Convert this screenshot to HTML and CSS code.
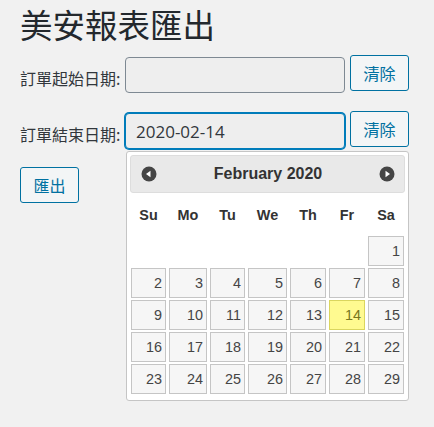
FILE: index.html
```html
<!DOCTYPE html>
<html lang="zh-Hant">
<head>
<meta charset="utf-8">
<title>美安報表匯出</title>
<link rel="stylesheet" href="styles.css">
</head>
<body>
<div class="wrap">
  <h1 class="page-title">美安報表匯出</h1>
  <form class="export-form">
    <div class="field-row">
      <label class="field-label" for="start">訂單起始日期:</label>
      <input class="date-input" id="start" type="text" value="">
      <button type="button" class="btn">清除</button>
    </div>
    <div class="field-row">
      <label class="field-label" for="end">訂單結束日期:</label>
      <input class="date-input is-focused" id="end" type="text" value="2020-02-14">
      <button type="button" class="btn">清除</button>
    </div>
    <div class="submit-row">
      <button type="submit" class="btn">匯出</button>
    </div>
  </form>

  <div class="datepicker">
    <div class="dp-header">
      <span class="dp-nav"><svg width="16" height="16" viewBox="0 0 16 16"><circle cx="8" cy="8" r="7.5" fill="#454545"/><path d="M5 8 L9.5 4.8 L9.5 11.2 Z" fill="#fff"/></svg></span>
      <span class="dp-title">February 2020</span>
      <span class="dp-nav"><svg width="16" height="16" viewBox="0 0 16 16"><circle cx="8" cy="8" r="7.5" fill="#454545"/><path d="M11 8 L6.5 4.8 L6.5 11.2 Z" fill="#fff"/></svg></span>
    </div>
    <div class="dp-days">
      <span>Su</span><span>Mo</span><span>Tu</span><span>We</span><span>Th</span><span>Fr</span><span>Sa</span>
    </div>
    <div class="dp-grid">
      <span class="empty"></span><span class="empty"></span><span class="empty"></span><span class="empty"></span><span class="empty"></span><span class="empty"></span><a class="day">1</a>
      <a class="day">2</a><a class="day">3</a><a class="day">4</a><a class="day">5</a><a class="day">6</a><a class="day">7</a><a class="day">8</a>
      <a class="day">9</a><a class="day">10</a><a class="day">11</a><a class="day">12</a><a class="day">13</a><a class="day is-today">14</a><a class="day">15</a>
      <a class="day">16</a><a class="day">17</a><a class="day">18</a><a class="day">19</a><a class="day">20</a><a class="day">21</a><a class="day">22</a>
      <a class="day">23</a><a class="day">24</a><a class="day">25</a><a class="day">26</a><a class="day">27</a><a class="day">28</a><a class="day">29</a>
    </div>
  </div>
</div>
</body>
</html>
```
FILE: styles.css
```css
* { box-sizing: border-box; }
html, body {
  margin: 0;
  padding: 0;
  background: #f1f1f1;
}
body {
  font-family: "Noto Sans CJK TC", "Noto Sans", sans-serif;
  color: #23282d;
  font-size: 16px;
}
.wrap {
  position: relative;
  padding: 4px 20px 0 20px;
  height: 427px;
}
.page-title {
  margin: 0;
  font-size: 32.5px;
  line-height: 40px;
  font-weight: 400;
  color: #23282d;
}
.export-form {
  margin-top: 11px;
}
.field-row {
  display: flex;
  align-items: flex-start;
  height: 38px;
  margin-bottom: 18px;
}
.field-label {
  margin-top: 13px;
  line-height: 20px;
  font-size: 16px;
  color: #32373c;
  width: 105px;
  flex: none;
}
.date-input {
  margin-top: 2px;
  width: 220px;
  height: 36px;
  border: 1px solid #7e8993;
  border-radius: 4px;
  background: #eeeeee;
  padding: 0 10px;
  font-family: "Open Sans", "Noto Sans", sans-serif;
  font-size: 17px;
  color: #32373c;
  outline: none;
}
.date-input.is-focused {
  border-color: #007cba;
  box-shadow: 0 0 0 1px #007cba;
}
.btn {
  margin-left: 5px;
  width: 59px;
  height: 36px;
  border: 1px solid #0071a1;
  border-radius: 3px;
  background: #f3f5f6;
  color: #0071a1;
  font-family: "Noto Sans CJK TC", sans-serif;
  font-size: 16px;
  padding: 0;
  line-height: 1;
}
.submit-row .btn {
  margin-left: 0;
}
.datepicker {
  position: absolute;
  left: 126px;
  top: 151px;
  width: 283px;
  background: #fff;
  border: 1px solid #c5c5c5;
  border-radius: 3px;
  padding: 3px 3px 6px;
  font-family: "Liberation Sans", Arial, sans-serif;
}
.dp-header {
  display: flex;
  align-items: center;
  height: 38px;
  padding: 0 9px 0 10px;
  background: #e9e9e9;
  border: 1px solid #dddddd;
  border-radius: 3px;
  color: #333;
}
.dp-nav {
  display: flex;
  width: 16px;
  height: 16px;
}
.dp-title {
  flex: 1;
  text-align: center;
  font-weight: 700;
  font-size: 16px;
}
.dp-days,
.dp-grid {
  display: grid;
  grid-template-columns: 35px 38px 35px 39px 36px 36px 36px;
  column-gap: 3px;
  margin: 0 1px;
}
.dp-days {
  height: 43px;
  align-items: center;
  font-weight: 700;
  font-size: 14.4px;
  color: #333;
  text-align: center;
  padding-top: 1px;
}
.dp-grid {
  grid-auto-rows: 30px;
  row-gap: 2px;
}
.day {
  display: flex;
  align-items: center;
  justify-content: flex-end;
  padding-right: 3px;
  border: 1px solid #c5c5c5;
  background: #f6f6f6;
  color: #454545;
  font-size: 14.4px;
}
.day.is-today {
  border-color: #dad55e;
  background: #fffa90;
  color: #777620;
}
```
